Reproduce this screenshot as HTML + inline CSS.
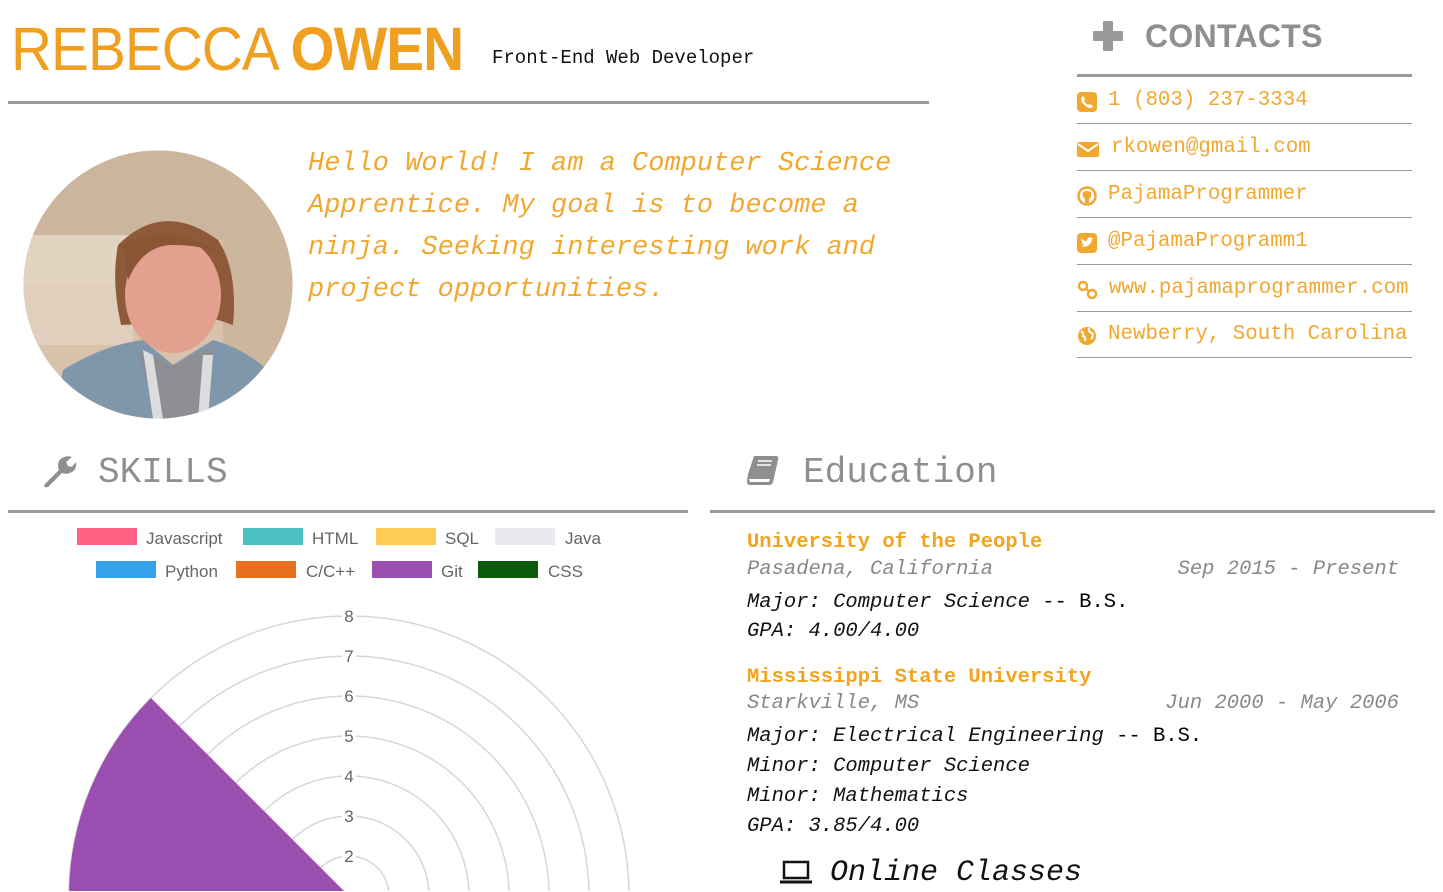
<!DOCTYPE html>
<html><head><meta charset="utf-8">
<style>
*{margin:0;padding:0;box-sizing:border-box}
body{width:1443px;height:891px;overflow:hidden;background:#fff;position:relative;font-family:"Liberation Sans",sans-serif}
.a{position:absolute;white-space:nowrap}
.mono{font-family:"Liberation Mono",monospace}
.or{color:#f0a420}
.hr{position:absolute;background:#9a9a9a}
.ci{position:absolute;left:1077px;width:335px;height:1px;background:#999}
.ct{position:absolute;left:1077px;width:360px;white-space:nowrap;font-family:"Liberation Mono",monospace;font-size:20.8px;color:#f0a830;line-height:24px;height:24px}
.ct svg{position:absolute;left:0;top:3px}
.ct span{white-space:nowrap}
.edu{position:absolute;left:747px;font-family:"Liberation Mono",monospace;font-size:20.5px;line-height:24px;white-space:nowrap}
.b{font-weight:bold;color:#f0a420}
.g{font-style:italic;color:#888}
.k{font-style:italic;color:#111}
.lg{position:absolute;font-size:17px;color:#666;line-height:20px}
.bx{position:absolute;width:60px;height:17px}
</style></head><body>

<div class="a" style="left:11px;top:14px;font-size:61px;color:#f0a020;line-height:70px;letter-spacing:-1px;transform:scaleX(0.93);transform-origin:0 0">REBECCA <b>OWEN</b></div>
<div class="a mono" style="left:492px;top:47px;font-size:19px;color:#111">Front-End Web Developer</div>
<div class="hr" style="left:8px;top:101px;width:921px;height:3px"></div>

<svg class="a" style="left:23px;top:150px" width="270" height="269" viewBox="0 0 270 269">
<defs><clipPath id="c"><ellipse cx="135" cy="134.5" rx="134.5" ry="134"/></clipPath></defs>
<g clip-path="url(#c)">
<rect width="270" height="269" fill="#d8c2ac"/>
<rect x="0" y="0" width="270" height="90" fill="#cbb59d"/>
<rect x="0" y="85" width="110" height="50" fill="#e3d4c2"/>
<rect x="0" y="135" width="110" height="60" fill="#e0cfbc"/>
<rect x="200" y="20" width="70" height="200" fill="#cdb69e"/>
<path d="M95 95 Q140 50 195 90 Q215 120 210 175 L195 170 L98 175 Q88 130 95 95Z" fill="#8e5a3a"/>
<ellipse cx="150" cy="145" rx="48" ry="58" fill="#e3a08e"/>
<path d="M100 95 Q150 70 200 105 Q180 95 150 95 Q120 95 105 130Z" fill="#8a5535"/>
<path d="M30 269 L40 220 Q80 195 120 190 L150 215 L190 190 Q225 200 250 225 L260 269Z" fill="#7f96ab"/>
<path d="M115 200 L135 269 L175 269 L190 195 L150 215Z" fill="#8d8f94"/>
<path d="M120 200 L130 269 L140 269 L130 205Z" fill="#dcdcdc"/>
<path d="M180 205 L175 269 L185 269 L190 205Z" fill="#dcdcdc"/>
</g></svg>

<div class="a mono or" style="left:308px;top:143px;font-size:27px;font-style:italic;line-height:42px;color:#f0a830">Hello World! I am a Computer Science<br>Apprentice. My goal is to become a<br>ninja. Seeking interesting work and<br>project opportunities.</div>

<!-- contacts -->
<svg class="a" style="left:1093px;top:21px" width="30" height="30" viewBox="0 0 30 30"><path d="M11 1h8v10h10v8H19v10h-8V19H1v-8h10z" fill="#999" stroke="#999" stroke-linejoin="round" stroke-width="2"/></svg>
<div class="a" style="left:1145px;top:18px;font-size:32px;color:#8f8f8f;font-weight:bold;letter-spacing:0.3px">CONTACTS</div>
<div class="hr" style="left:1077px;top:74px;width:335px;height:3px"></div>

<div class="ct" style="top:89px"><svg width="20" height="20"><rect x="0" y="0" width="20" height="20" rx="4" fill="#f0a830"/><path d="M6 4 Q3 6 5 10 Q8 15 13 16 Q16 16 16 14 L13 12 L11 13 Q8 11 7 9 L8 7Z" fill="#fff"/></svg><span style="position:absolute;left:31px">1 (803) 237-3334</span></div>
<div class="ci" style="top:123px"></div>
<div class="ct" style="top:136px"><svg width="22" height="20"><rect x="0" y="3" width="22" height="15" rx="2" fill="#f0a830"/><path d="M1 5 L11 12 L21 5" stroke="#fff" stroke-width="2" fill="none"/></svg><span style="position:absolute;left:34px">rkowen@gmail.com</span></div>
<div class="ci" style="top:170px"></div>
<div class="ct" style="top:183px"><svg width="20" height="20"><circle cx="10" cy="10" r="8.5" fill="none" stroke="#f0a830" stroke-width="2.5"/><path d="M6 6 Q10 4 14 6 Q15 11 12 13 L12 17 L8 17 L8 13 Q5 11 6 6Z" fill="#f0a830"/></svg><span style="position:absolute;left:31px">PajamaProgrammer</span></div>
<div class="ci" style="top:217px"></div>
<div class="ct" style="top:230px"><svg width="20" height="20"><rect width="20" height="20" rx="4" fill="#f0a830"/><path d="M4 13 Q8 15 12 12 Q15 9 15 6 L17 5 L15 5 Q13 3 11 5 Q10 7 10 8 Q6 8 4 5 Q4 9 6 10 Q5 10 5 10 Q6 12 8 12 Q6 13 4 13Z" fill="#fff"/></svg><span style="position:absolute;left:31px">@PajamaProgramm1</span></div>
<div class="ci" style="top:264px"></div>
<div class="ct" style="top:277px"><svg width="22" height="20"><circle cx="6" cy="6" r="4" fill="none" stroke="#f0a830" stroke-width="2.5"/><circle cx="15" cy="14" r="4" fill="none" stroke="#f0a830" stroke-width="2.5"/><path d="M8 8 L13 12" stroke="#f0a830" stroke-width="2.5"/></svg><span style="position:absolute;left:32px">www.pajamaprogrammer.com</span></div>
<div class="ci" style="top:311px"></div>
<div class="ct" style="top:323px"><svg width="20" height="20"><circle cx="10" cy="10" r="9" fill="#f0a830"/><path d="M4 5 Q7 7 6 10 Q9 11 8 15 M12 2 Q11 6 15 7 Q17 10 14 13" stroke="#fff" stroke-width="2" fill="none"/></svg><span style="position:absolute;left:31px">Newberry, South Carolina</span></div>
<div class="ci" style="top:357px"></div>

<!-- skills -->
<svg class="a" style="left:41px;top:454px" width="36" height="34" viewBox="0 0 36 34"><path d="M4 30 L18 16 Q15 8 21 4 Q26 1 31 3 L25 8 L27 12 L31 13 L35 8 Q36 15 31 18 Q26 21 21 19 L7 33 Q4 34 3 32Z" fill="#8f8f8f"/></svg>
<div class="a mono" style="left:98px;top:452px;font-size:36px;color:#8f8f8f;line-height:42px">SKILLS</div>
<div class="hr" style="left:8px;top:510px;width:680px;height:3px"></div>

<div class="bx" style="left:77px;top:528px;background:#ff6384"></div><div class="lg" style="left:146px;top:529px">Javascript</div>
<div class="bx" style="left:243px;top:528px;background:#4bc0c0"></div><div class="lg" style="left:312px;top:529px">HTML</div>
<div class="bx" style="left:376px;top:528px;background:#ffcd56"></div><div class="lg" style="left:445px;top:529px">SQL</div>
<div class="bx" style="left:495px;top:528px;background:#e7e9ed"></div><div class="lg" style="left:565px;top:529px">Java</div>
<div class="bx" style="left:96px;top:561px;background:#36a2eb"></div><div class="lg" style="left:165px;top:562px">Python</div>
<div class="bx" style="left:236px;top:561px;background:#e8711f"></div><div class="lg" style="left:306px;top:562px">C/C++</div>
<div class="bx" style="left:372px;top:561px;background:#9a4fb0"></div><div class="lg" style="left:441px;top:562px">Git</div>
<div class="bx" style="left:478px;top:561px;background:#0a5c0a"></div><div class="lg" style="left:548px;top:562px">CSS</div>

<svg class="a" style="left:0;top:590px" width="700" height="301" viewBox="0 590 700 301">
<g fill="none" stroke="#d6d6d6" stroke-width="1.5">
<circle cx="349" cy="896" r="40"/><circle cx="349" cy="896" r="80"/><circle cx="349" cy="896" r="120"/><circle cx="349" cy="896" r="160"/><circle cx="349" cy="896" r="200"/><circle cx="349" cy="896" r="240"/><circle cx="349" cy="896" r="280"/>
</g>
<path d="M349 896 L151 698 A280 280 0 0 0 69 896 Z" fill="#9a4fb0"/>
<g font-family="Liberation Sans" font-size="17" fill="#666" text-anchor="middle">
<rect x="342" y="846" width="14" height="18" fill="#fff"/><text x="349" y="862">2</text>
<rect x="342" y="806" width="14" height="18" fill="#fff"/><text x="349" y="822">3</text>
<rect x="342" y="766" width="14" height="18" fill="#fff"/><text x="349" y="782">4</text>
<rect x="342" y="726" width="14" height="18" fill="#fff"/><text x="349" y="742">5</text>
<rect x="342" y="686" width="14" height="18" fill="#fff"/><text x="349" y="702">6</text>
<rect x="342" y="646" width="14" height="18" fill="#fff"/><text x="349" y="662">7</text>
<rect x="342" y="606" width="14" height="18" fill="#fff"/><text x="349" y="622">8</text>
</g></svg>

<!-- education -->
<svg class="a" style="left:746px;top:454px" width="34" height="34" viewBox="0 0 34 34"><path d="M8 2 L31 2 Q33 3 32 6 L27 28 Q26 31 23 31 L4 31 Q1 31 1 27 L2 20 Z" fill="#8f8f8f"/><path d="M3 25 L24 25 L23 28 L4 28Z" fill="#fff"/><path d="M12 7h14M11 11h14" stroke="#fff" stroke-width="1.5"/></svg>
<div class="a mono" style="left:803px;top:452px;font-size:36px;color:#8f8f8f;line-height:42px">Education</div>
<div class="hr" style="left:710px;top:510px;width:725px;height:3px"></div>

<div class="edu b" style="top:531px">University of the People</div>
<div class="edu g" style="top:558px">Pasadena, California</div>
<div class="edu g" style="top:558px;left:auto;right:44px">Sep 2015 - Present</div>
<div class="edu" style="top:591px"><span class="k">Major: Computer Science</span> -- B.S.</div>
<div class="edu k" style="top:620px">GPA: 4.00/4.00</div>
<div class="edu b" style="top:666px">Mississippi State University</div>
<div class="edu g" style="top:692px">Starkville, MS</div>
<div class="edu g" style="top:692px;left:auto;right:44px">Jun 2000 - May 2006</div>
<div class="edu" style="top:725px"><span class="k">Major: Electrical Engineering</span> -- B.S.</div>
<div class="edu k" style="top:755px">Minor: Computer Science</div>
<div class="edu k" style="top:785px">Minor: Mathematics</div>
<div class="edu k" style="top:815px">GPA: 3.85/4.00</div>
<svg class="a" style="left:779px;top:859px" width="34" height="26" viewBox="0 0 34 26"><rect x="5" y="3" width="24" height="16" fill="none" stroke="#111" stroke-width="2.5"/><path d="M1 23 H33" stroke="#111" stroke-width="3"/></svg>
<div class="a mono" style="left:830px;top:854px;font-size:30px;font-style:italic;color:#111;line-height:38px">Online Classes</div>
</body></html>
